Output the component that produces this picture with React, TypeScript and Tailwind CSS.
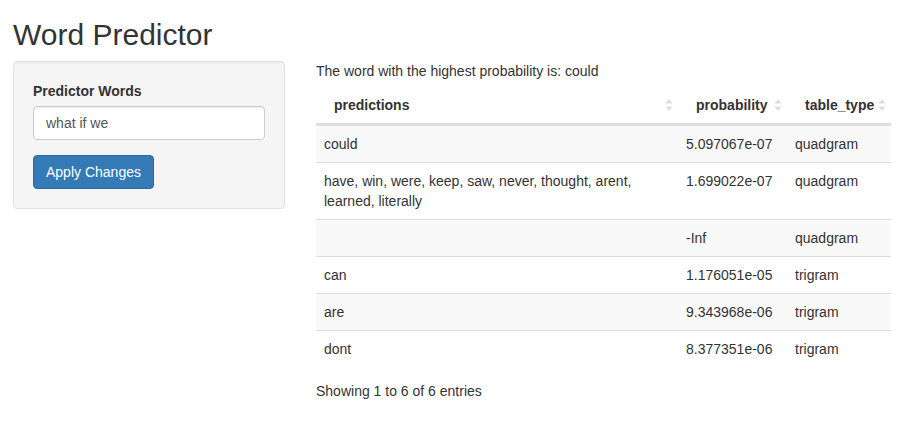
const rows = [
  { word: "could", prob: "5.097067e-07", type: "quadgram" },
  {
    word: "have, win, were, keep, saw, never, thought, arent, learned, literally",
    prob: "1.699022e-07",
    type: "quadgram",
  },
  { word: "", prob: "-Inf", type: "quadgram" },
  { word: "can", prob: "1.176051e-05", type: "trigram" },
  { word: "are", prob: "9.343968e-06", type: "trigram" },
  { word: "dont", prob: "8.377351e-06", type: "trigram" },
];

const SortIcon = () => (
  <svg
    width="8"
    height="14"
    viewBox="0 0 8 14"
    className="absolute right-[5px] top-1/2 -translate-y-1/2"
  >
    <path d="M4 1 L7.5 5.5 L0.5 5.5 Z" fill="#dcdcdc" />
    <path d="M4 13 L7.5 8.5 L0.5 8.5 Z" fill="#dcdcdc" />
  </svg>
);

const App = () => {
  return (
    <div className="min-h-[435px] bg-white px-[13px] text-[14px] leading-[20px] text-[#333] font-['Liberation_Sans',Arial,sans-serif]">
      <h2 className="pt-[18px] mb-[10px] text-[30px] leading-[33px] font-normal">
        Word Predictor
      </h2>
      <div className="flex">
        <div className="w-[272px] shrink-0">
          <div className="bg-[#f5f5f5] border border-[#e3e3e3] rounded-[4px] p-[19px] shadow-[inset_0_1px_1px_rgba(0,0,0,0.05)]">
            <label className="block font-bold mb-[5px]">Predictor Words</label>
            <input
              className="block w-full h-[34px] px-[12px] py-[6px] border border-[#ccc] rounded-[4px] bg-white text-[#555] shadow-[inset_0_1px_1px_rgba(0,0,0,0.075)] focus:outline-none"
              type="text"
              defaultValue="what if we"
            />
            <button className="mt-[15px] h-[34px] px-[12px] bg-[#337ab7] border border-[#2e6da4] rounded-[4px] text-white">
              Apply Changes
            </button>
          </div>
        </div>
        <div className="ml-[31px] w-[575px]">
          <div>The word with the highest probability is: could</div>
          <table className="mt-[6px] w-[575px] table-fixed border-separate border-spacing-0">
            <thead>
              <tr>
                <th className="relative w-[362px] px-[18px] py-[8px] text-left font-bold border-b-2 border-[#ddd]">
                  predictions
                  <SortIcon />
                </th>
                <th className="relative w-[109px] px-[18px] py-[8px] text-left font-bold border-b-2 border-[#ddd]">
                  probability
                  <SortIcon />
                </th>
                <th className="relative w-[104px] px-[18px] py-[8px] text-left font-bold border-b-2 border-[#ddd]">
                  table_type
                  <SortIcon />
                </th>
              </tr>
            </thead>
            <tbody>
              {rows.map((r, i) => (
                <tr key={i} className={i % 2 === 0 ? "bg-[#f9f9f9]" : "bg-white"}>
                  <td className="p-[8px] pr-[40px] align-top border-t border-[#ddd]">{r.word}</td>
                  <td className="p-[8px] align-top border-t border-[#ddd]">{r.prob}</td>
                  <td className="p-[8px] align-top border-t border-[#ddd]">{r.type}</td>
                </tr>
              ))}
            </tbody>
          </table>
          <div className="mt-[6px] pt-[8px]">Showing 1 to 6 of 6 entries</div>
        </div>
      </div>
    </div>
  );
};

export default App;
